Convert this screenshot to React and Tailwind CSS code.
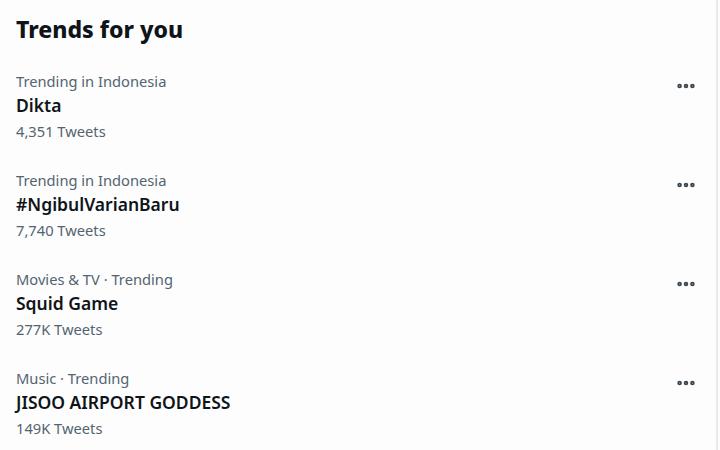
import { MoreHorizontal } from "lucide-react";

const trends = [
  { meta: "Trending in Indonesia", name: "Dikta", count: "4,351 Tweets" },
  { meta: "Trending in Indonesia", name: "#NgibulVarianBaru", count: "7,740 Tweets" },
  { meta: "Movies & TV · Trending", name: "Squid Game", count: "277K Tweets" },
  { meta: "Music · Trending", name: "JISOO AIRPORT GODDESS", count: "149K Tweets" },
];

export default function App() {
  return (
    <div className="w-[720px] h-[450px] bg-[#fdfdfd] overflow-hidden" style={{ fontFamily: '"Noto Sans", sans-serif' }}>
      <div className="w-[718px] h-full border-r-2 border-[#e7eaeb]">
        <h2 className="px-4 pt-[14px] text-[23px] leading-[30px] font-extrabold text-[#0f1419]">Trends for you</h2>
        <div className="mt-[27px]">
          {trends.map((t) => (
            <div key={t.name} className="flex justify-between pl-4 pr-[19px] h-[99px]">
              <div>
                <p className="text-[14.7px] leading-[20px] text-[#536471]">{t.meta}</p>
                <p className="mt-[2px] text-[17.5px] leading-[24px] font-semibold text-[#0f1419]">{t.name}</p>
                <p className="mt-[4px] text-[14.7px] leading-[20px] text-[#536471]">{t.count}</p>
              </div>
              <MoreHorizontal className="w-[22px] h-[22px] mt-[4px] text-[#3c4650]" strokeWidth={3} />
            </div>
          ))}
        </div>
      </div>
    </div>
  );
}
